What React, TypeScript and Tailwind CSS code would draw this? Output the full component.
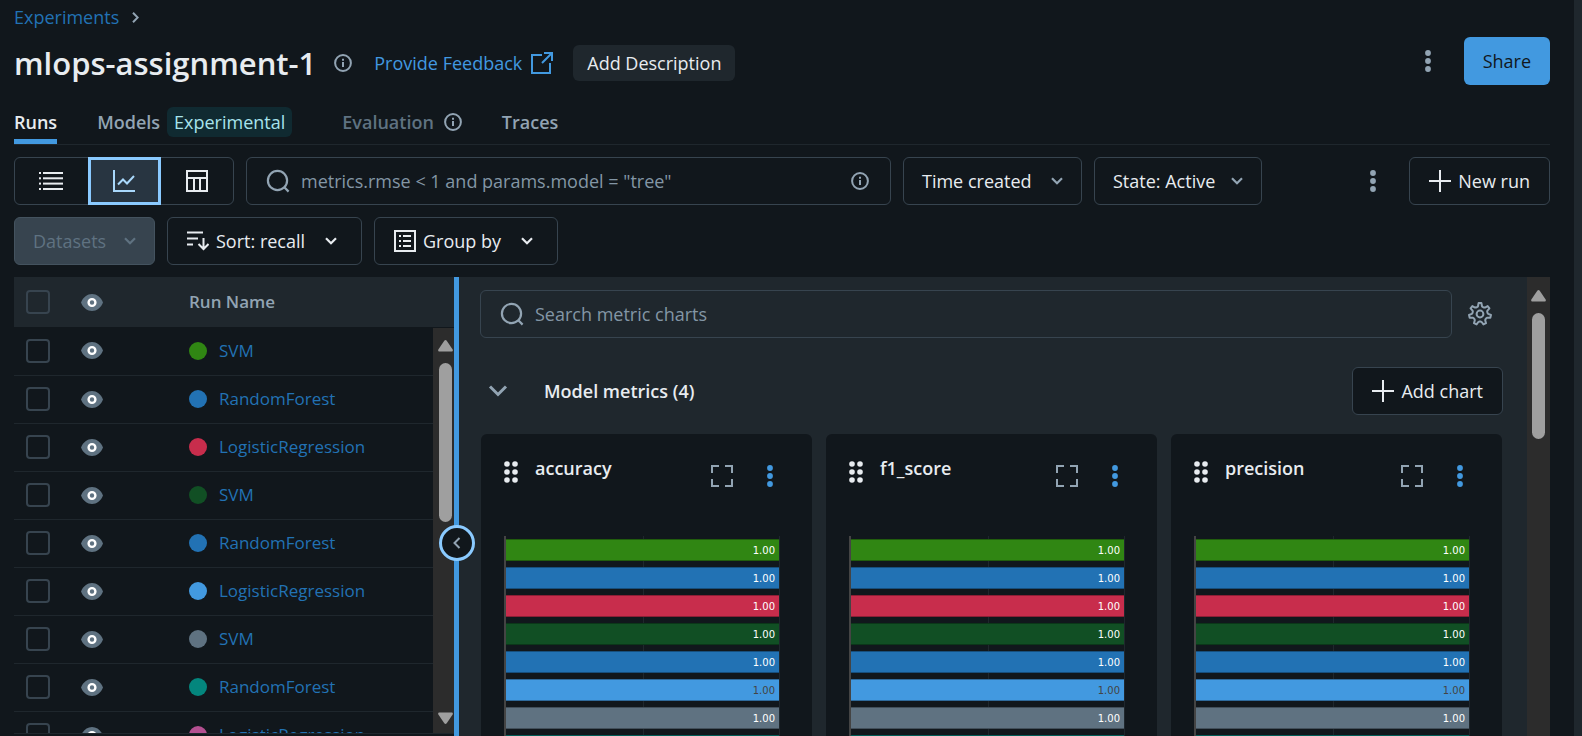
import type { ReactNode } from "react";

type IconProps = { className?: string };

function ChevronDown({ className = "" }: IconProps) {
  return (
    <svg className={className} width="12" height="8" viewBox="0 0 12 8" fill="none" stroke="currentColor" strokeWidth="2.2">
      <path d="M1 1.2 6 6.2l5-5" />
    </svg>
  );
}

function InfoIcon({ className = "" }: IconProps) {
  return (
    <svg className={className} width="18" height="18" viewBox="0 0 18 18" fill="none">
      <circle cx="9" cy="9" r="7.9" stroke="currentColor" strokeWidth="2" />
      <path d="M9 8v5M9 4.8v2" stroke="currentColor" strokeWidth="2" />
    </svg>
  );
}

function SearchIcon({ className = "" }: IconProps) {
  return (
    <svg className={className} width="24" height="24" viewBox="0 0 24 24" fill="none" stroke="currentColor" strokeWidth="2.2">
      <circle cx="11.500" cy="11.500" r="9.600" />
      <path d="m17.800 17.800 4.800 4.800" />
    </svg>
  );
}

function DotsIcon({ className = "" }: IconProps) {
  return (
    <svg className={className} width="6" height="22" viewBox="0 0 6 22" fill="currentColor">
      <circle cx="3" cy="3" r="2.9" />
      <circle cx="3" cy="11" r="2.9" />
      <circle cx="3" cy="19" r="2.9" />
    </svg>
  );
}

function GripIcon() {
  return (
    <svg width="14" height="22" viewBox="0 0 14 22" fill="currentColor">
      {[3, 11, 19].map((y) => (
        <g key={y}>
          <circle cx="3" cy={y} r="2.8" />
          <circle cx="11" cy={y} r="2.8" />
        </g>
      ))}
    </svg>
  );
}

function PlusIcon() {
  return (
    <svg width="22" height="22" viewBox="0 0 22 22" stroke="currentColor" strokeWidth="2">
      <path d="M11 0v22M0 11h22" />
    </svg>
  );
}

function ExternalIcon() {
  return (
    <svg width="22" height="22" viewBox="0 0 22 22" fill="none" stroke="currentColor" strokeWidth="2">
      <path d="M11 3H1v18h18V11M13 1h8v8M21 1 11 11" />
    </svg>
  );
}

function ListIcon() {
  return (
    <svg width="24" height="18" viewBox="0 0 24 18" fill="currentColor">
      {[0, 5.3, 10.6, 16].map((y) => (
        <g key={y}>
          <rect x="0" y={y} width="2" height="2" />
          <rect x="4" y={y} width="20" height="2" />
        </g>
      ))}
    </svg>
  );
}

function LineChartIcon() {
  return (
    <svg width="22" height="22" viewBox="0 0 22 22" fill="none" stroke="currentColor" strokeWidth="2">
      <path d="M1 0v21h21M5 14.500l5-5 4 4 7-7.500" />
    </svg>
  );
}

function TableIcon() {
  return (
    <svg width="22" height="22" viewBox="0 0 22 22" fill="none" stroke="currentColor" strokeWidth="2">
      <path d="M1 1h20v20H1zM1 8h20M8 8v13M14 8v13" />
    </svg>
  );
}

function SortIcon() {
  return (
    <svg width="22" height="20" viewBox="0 0 22 20" fill="none" stroke="currentColor" strokeWidth="2">
      <path d="M0 1.500h16M0 7.500h11M0 13.500h6M16.500 7v11M11.500 13l5 5 5-5" />
    </svg>
  );
}

function GroupIcon() {
  return (
    <svg width="22" height="22" viewBox="0 0 22 22" fill="none" stroke="currentColor" strokeWidth="2">
      <path d="M1 1h20v20H1zM5 6h2M9 6h8M5 11h2M9 11h8M5 16h2M9 16h8" />
    </svg>
  );
}

function EyeIcon() {
  return (
    <svg width="22" height="17" viewBox="0 0 22 17">
      <path d="M0 8.500C2.200 3 6.300 0 11 0s8.800 3 11 8.500C19.800 14 15.700 17 11 17S2.200 14 0 8.500Z" fill="#5f7281" />
      <circle cx="11" cy="8.500" r="3.400" fill="none" stroke="#fff" strokeWidth="2.400" />
    </svg>
  );
}

function FullscreenIcon() {
  return (
    <svg width="22" height="22" viewBox="0 0 22 22" fill="none" stroke="currentColor" strokeWidth="2">
      <path d="M8 1H1v7M14 1h7v7M8 21H1v-7M14 21h7v-7" />
    </svg>
  );
}

const gearPath = (() => {
  const teeth = 7;
  const points: string[] = [];
  for (let i = 0; i < teeth; i++) {
    const base = -Math.PI / 2 + (i * 2 * Math.PI) / teeth;
    for (const [offset, radius] of [[-0.34, 7.6], [-0.24, 8.2], [-0.13, 11], [0.13, 11], [0.24, 8.2], [0.34, 7.6]]) {
      const a = base + offset;
      points.push(`${(12 + radius * Math.cos(a)).toFixed(2)} ${(12 + radius * Math.sin(a)).toFixed(2)}`);
    }
  }
  return `M${points.join("L")}Z`;
})();

function GearIcon() {
  return (
    <svg width="24" height="24" viewBox="0 0 24 24" fill="none" stroke="currentColor" strokeWidth="2" strokeLinejoin="round">
      <path d={gearPath} />
      <circle cx="12" cy="12" r="3.400" />
    </svg>
  );
}

function ScrollArrow({ down = false }: { down?: boolean }) {
  return (
    <svg width="15" height="12" viewBox="0 0 15 12" fill="#9f9f9f" className={down ? "rotate-180" : ""}>
      <path d="M6.300.8a1.500 1.500 0 0 1 2.400 0l5.800 8.400c.8 1.200.2 2.300-1 2.300h-12c-1.200 0-1.800-1.100-1-2.300Z" />
    </svg>
  );
}

const outlined =
  "flex h-12 shrink-0 items-center rounded-md border border-[#37444f] whitespace-nowrap text-[#e8ecf0]";

function IconButton({ label, className = "", children }: { label: string; className?: string; children: ReactNode }) {
  return (
    <button type="button" aria-label={label} className={`flex shrink-0 items-center justify-center ${className}`}>
      {children}
    </button>
  );
}

function Checkbox({ label }: { label: string }) {
  return (
    <input
      type="checkbox"
      aria-label={label}
      className="block size-6 appearance-none rounded border-2 border-[#37444f] checked:bg-[#4299e0]"
    />
  );
}

const runs = [
  { name: "SVM", color: "#308613" },
  { name: "RandomForest", color: "#2272b4" },
  { name: "LogisticRegression", color: "#c82d4c" },
  { name: "SVM", color: "#114f24" },
  { name: "RandomForest", color: "#2272b4" },
  { name: "LogisticRegression", color: "#4299e0", darkLabel: true },
  { name: "SVM", color: "#5f7281" },
  { name: "RandomForest", color: "#04867d" },
  { name: "LogisticRegression", color: "#b45091" },
];

function RunsTable() {
  return (
    <div className="relative w-[440px] shrink-0 overflow-hidden border-b border-[#1f272d]">
      <table className="w-full table-fixed border-collapse text-left text-[17px]">
        <colgroup>
          <col className="w-[67px]" />
          <col className="w-[108px]" />
          <col />
        </colgroup>
        <thead>
          <tr className="h-[50px] bg-[#1f272d]">
            <th className="pl-3"><Checkbox label="Select all runs" /></th>
            <th>
              <IconButton label="Toggle visibility of all runs"><EyeIcon /></IconButton>
            </th>
            <th className="font-semibold text-[#92a4b3]">Run Name</th>
          </tr>
        </thead>
        <tbody>
          {runs.map((run, i) => (
            <tr key={i} className="h-12 border-b border-[#1f272d]">
              <td className="pl-3"><Checkbox label={`Select run ${i + 1}`} /></td>
              <td>
                <IconButton label={`Toggle visibility of run ${i + 1}`}><EyeIcon /></IconButton>
              </td>
              <td>
                <a href="#run" className="flex items-center gap-3 text-[#2272b4]">
                  <span className="size-[18px] rounded-full" style={{ backgroundColor: run.color }} />
                  {run.name}
                </a>
              </td>
            </tr>
          ))}
        </tbody>
      </table>
      <div className="absolute top-[51px] right-0 bottom-0 flex w-[21px] flex-col items-center bg-[#2c2c2c] pt-3 pb-[9px] pl-1">
        <ScrollArrow />
        <div className="mt-[11px] h-[159px] w-[13px] rounded-full bg-[#9f9f9f]" />
        <div className="mt-auto"><ScrollArrow down /></div>
      </div>
    </div>
  );
}

function ChartCard({ title }: { title: string }) {
  return (
    <section className="min-w-0 flex-1 rounded-md bg-[#11171c] pt-6 pr-8 pl-[23px]">
      <div className="flex h-[78px] items-start text-[#e8ecf0]">
        <span className="pt-[3px]"><GripIcon /></span>
        <h3 className="ml-[17px] text-[18px] leading-5 font-semibold">{title}</h3>
        <IconButton label={`Expand ${title}`} className="mt-[7px] ml-auto text-[#92a4b3]"><FullscreenIcon /></IconButton>
        <IconButton label={`${title} options`} className="mt-[7px] mr-[7px] ml-[34px] text-[#4299e0]"><DotsIcon /></IconButton>
      </div>
      <div className="relative flex flex-col gap-1.5 border-r border-l-2 border-r-[#1f272d] border-l-[#444] pt-[3px]">
        <div className="absolute top-0 bottom-0 left-1/2 w-px bg-[#1f272d]" />
        {runs.map((run, i) => (
          <div
            key={i}
            className={`relative flex h-[22px] shrink-0 items-center justify-end border-y border-black/30 pt-0.5 pr-1 font-['DejaVu_Sans',sans-serif] text-[10px] ${run.darkLabel ? "text-[#444]" : "text-white"}`}
            style={{ backgroundColor: run.color }}
          >
            1.00
          </div>
        ))}
      </div>
    </section>
  );
}

function ChartsPanel() {
  return (
    <div className="flex min-w-0 flex-1 bg-[#1f272d]">
      <div className="min-w-0 flex-1 overflow-hidden pt-[13px] pr-6 pl-[21px]">
        <div className="flex items-center">
          <label className="flex h-12 flex-1 items-center rounded-md border border-[#37444f] pl-[19px] text-[#92a4b3]">
            <SearchIcon />
            <input
              aria-label="Search metric charts"
              placeholder="Search metric charts"
              className="ml-[11px] min-w-0 flex-1 bg-transparent text-[#e8ecf0] outline-none placeholder:text-[#8396a5]"
            />
          </label>
          <IconButton label="Chart settings" className="mr-[11px] ml-4 text-[#92a4b3]"><GearIcon /></IconButton>
        </div>
        <div className="mt-[29px] flex items-center">
          <IconButton label="Collapse section" className="ml-2 text-[#92a4b3]">
            <svg width="20" height="12" viewBox="0 0 20 12" fill="none" stroke="currentColor" strokeWidth="3">
              <path d="m2 1.500 8 8 8-8" />
            </svg>
          </IconButton>
          <h2 className="ml-9 font-semibold text-[#e8ecf0]">Model metrics (4)</h2>
          <button type="button" className={`${outlined} ml-auto gap-[7px] bg-[#11171c] px-[19px]`}>
            <PlusIcon />
            Add chart
          </button>
        </div>
        <div className="mt-[19px] flex gap-[14px] px-px">
          <ChartCard title="accuracy" />
          <ChartCard title="f1_score" />
          <ChartCard title="precision" />
        </div>
      </div>
      <div className="flex w-[23px] shrink-0 flex-col items-center bg-[#2c2c2c] pt-[13px]">
        <ScrollArrow />
        <div className="mt-[11px] h-[126px] w-[13px] rounded-full bg-[#9f9f9f]" />
      </div>
    </div>
  );
}

export default function App() {
  return (
    <div className="flex h-screen overflow-hidden bg-[#1f272d] font-['Open_Sans','Noto_Sans',sans-serif] text-[18px] leading-6 text-[#e8ecf0]">
      <main className="mr-2 flex min-w-0 flex-1 flex-col bg-[#11171c] pt-[5px] pr-6 pl-[14px]">
        <nav aria-label="Breadcrumb" className="flex items-center gap-[13px]">
          <a href="#experiments" className="text-[#2272b4]">Experiments</a>
          <svg width="7" height="11" viewBox="0 0 7 11" fill="none" stroke="#92a4b3" strokeWidth="2">
            <path d="m1 .8 4.700 4.700L1 10.200" />
          </svg>
        </nav>

        <header className="mt-2 flex h-12 items-center">
          <div className="flex items-center pt-1">
            <h1 className="text-[31px] leading-10 font-semibold">mlops-assignment-1</h1>
            <InfoIcon className="ml-[18px] text-[#92a4b3]" />
            <a href="#feedback" className="ml-[22px] flex items-center gap-[9px] text-[#4299e0]">
              Provide Feedback
              <ExternalIcon />
            </a>
            <button type="button" className="ml-5 h-9 rounded-md bg-[#1f272d] px-[14px]">Add Description</button>
          </div>
          <IconButton label="More actions" className="mr-[33px] ml-auto text-[#92a4b3]"><DotsIcon /></IconButton>
          <button type="button" className="h-12 rounded-md bg-[#4299e0] px-[19px] text-[#11171c]">Share</button>
        </header>

        <nav aria-label="Experiment views" className="mt-4 flex h-11 shrink-0 gap-10 border-b border-[#1f272d] font-semibold text-[#92a4b3]">
          <a href="#runs" className="flex items-center border-b-[5px] border-[#4299e0] pt-[3px] text-[#e8ecf0]">Runs</a>
          <a href="#models" className="flex items-center gap-[7px] pb-0.5">
            Models
            <span className="rounded-md bg-[#102a31] px-[7px] py-[3px] font-normal text-[#a7e3ec]">Experimental</span>
          </a>
          <span className="ml-[10px] flex items-center gap-2.5 pb-0.5 text-[#5f7281]">
            Evaluation
            <InfoIcon className="text-[#92a4b3]" />
          </span>
          <a href="#traces" className="flex items-center pb-0.5">Traces</a>
        </nav>

        <div className="mt-3 flex items-center gap-3">
          <div className="flex h-12 w-[220px] shrink-0 rounded-md border border-[#37444f]">
            <IconButton label="List view" className="flex-1"><ListIcon /></IconButton>
            <IconButton label="Chart view" className="-my-px w-[73px] border-3 border-[#8acaff] bg-[#283541] text-[#a9d8fb]"><LineChartIcon /></IconButton>
            <IconButton label="Table view" className="flex-1"><TableIcon /></IconButton>
          </div>
          <label className="flex h-12 max-w-[645px] min-w-0 flex-1 items-center rounded-md border border-[#37444f] px-[19px] text-[#92a4b3]">
            <SearchIcon />
            <input
              aria-label="Search runs"
              placeholder={'metrics.rmse < 1 and params.model = "tree"'}
              className="ml-[11px] min-w-0 flex-1 bg-transparent text-[#e8ecf0] outline-none placeholder:text-[#8396a5]"
            />
            <InfoIcon className="mr-0.5" />
          </label>
          <button type="button" className={`${outlined} w-[179px] justify-between px-[18px]`}>
            Time created
            <ChevronDown className="text-[#92a4b3]" />
          </button>
          <button type="button" className={`${outlined} w-[168px] justify-between px-[18px]`}>
            State: Active
            <ChevronDown className="text-[#92a4b3]" />
          </button>
          <IconButton label="More options" className="mr-[21px] ml-auto text-[#92a4b3]"><DotsIcon /></IconButton>
          <button type="button" className={`${outlined} gap-[7px] px-[19px]`}>
            <PlusIcon />
            New run
          </button>
        </div>

        <div className="mt-3 flex gap-3">
          <button type="button" disabled className="flex h-12 w-[141px] items-center justify-between rounded-md border border-[#44535f] bg-[#37444f] px-[18px] text-[#5f7281]">
            Datasets
            <ChevronDown />
          </button>
          <button type="button" className={`${outlined} w-[195px] pr-6 pl-[19px]`}>
            <SortIcon />
            <span className="ml-[7px]">Sort: recall</span>
            <ChevronDown className="ml-auto" />
          </button>
          <button type="button" className={`${outlined} w-[184px] pr-6 pl-[19px]`}>
            <GroupIcon />
            <span className="ml-[7px]">Group by</span>
            <ChevronDown className="ml-auto" />
          </button>
        </div>

        <div className="mt-3 flex min-h-0 flex-1">
          <div className="flex pb-0.5"><RunsTable /></div>
          <div className="relative w-[5px] shrink-0 bg-[#4299e0]">
            <button
              type="button"
              aria-label="Collapse runs table"
              className="absolute top-[248px] -left-[15px] flex size-9 items-center justify-center rounded-full border-3 border-[#8acaff] bg-[#11171c] text-[#92a4b3]"
            >
              <svg width="8" height="12" viewBox="0 0 8 12" fill="none" stroke="currentColor" strokeWidth="2">
                <path d="M6.500 1 1.500 6l5 5" />
              </svg>
            </button>
          </div>
          <ChartsPanel />
        </div>
      </main>
    </div>
  );
}
